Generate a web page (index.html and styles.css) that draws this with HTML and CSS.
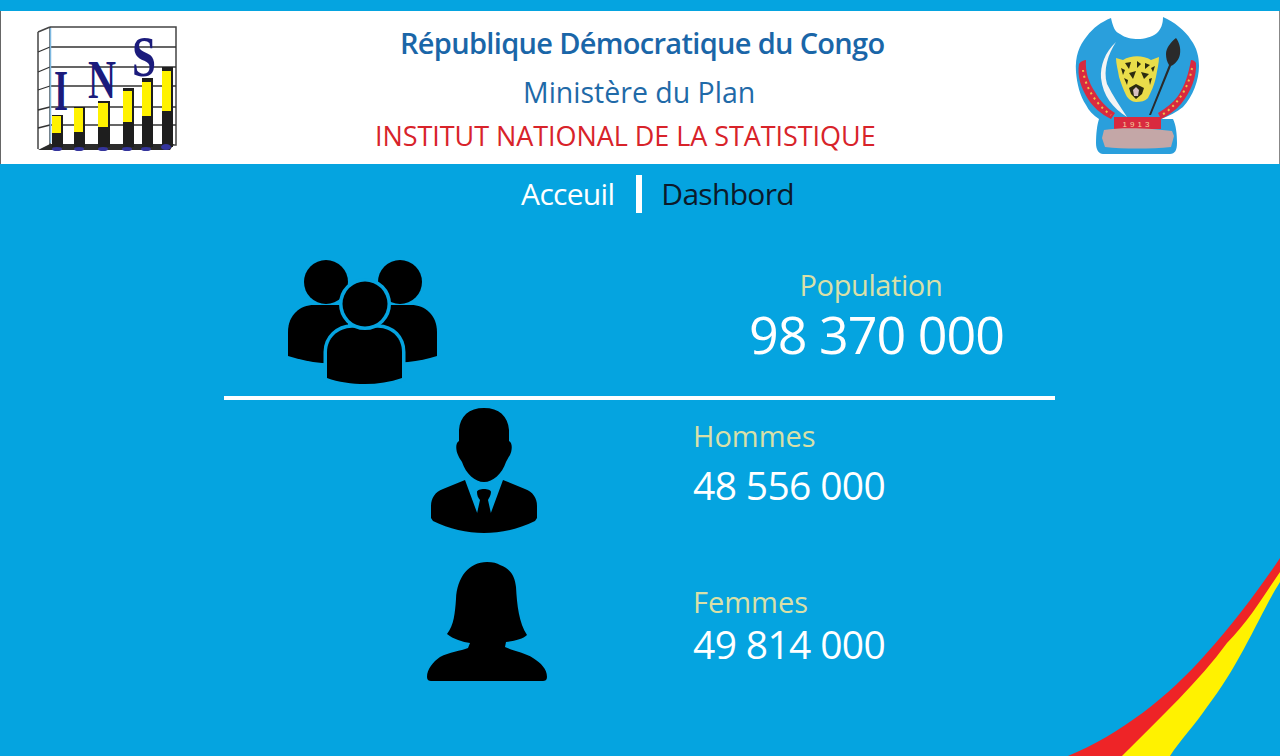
FILE: index.html
```html
<!DOCTYPE html>
<html lang="fr">
<head>
<meta charset="utf-8">
<title>INS</title>
<link rel="stylesheet" href="styles.css">
</head>
<body>
<header class="banner">
  <svg class="logo" viewBox="36 24 144 128" width="144" height="128">
    <path class="wall" d="M50 27H176V145H50V27M38 32L50 27M38 32V149"/>
    <path class="grid" d="M50 47H176M50 67H176M50 86H176M50 107H176M50 125H176M38 52L50 47M38 72L50 67M38 90L50 86M38 110L50 107M38 128L50 125"/>
    <path class="edge" d="M50.500 28V143"/>
    <path class="floor" d="M38 150L50 144H174L170 150Z"/>
    <g class="dark">
      <rect x="52" y="115" width="11" height="32"/><rect x="74" y="107" width="11" height="40"/><rect x="98" y="101" width="12" height="46"/>
      <rect x="123" y="88" width="11" height="59"/><rect x="142" y="78" width="11" height="69"/><rect x="162" y="67" width="11" height="80"/>
    </g>
    <g class="yellow">
      <rect x="52" y="116" width="9" height="17"/><rect x="74" y="108" width="9" height="24"/><rect x="98" y="103" width="10" height="24"/>
      <rect x="123" y="91" width="9" height="31"/><rect x="142" y="82" width="9" height="34"/><rect x="162" y="71" width="9" height="40"/>
    </g>
    <g class="feet">
      <ellipse cx="57" cy="149" rx="5" ry="2"/><ellipse cx="79" cy="149" rx="5" ry="2"/><ellipse cx="103" cy="149" rx="5" ry="2"/>
      <ellipse cx="127" cy="149" rx="5" ry="2"/><ellipse cx="146" cy="149" rx="5" ry="2"/><ellipse cx="166" cy="147" rx="5" ry="3"/>
    </g>
    <text class="ins" x="54" y="110" font-size="56" textLength="14" lengthAdjust="spacingAndGlyphs">I</text>
    <text class="ins" x="88" y="98" font-size="54" textLength="28" lengthAdjust="spacingAndGlyphs">N</text>
    <text class="ins" x="132" y="76" font-size="58" textLength="24" lengthAdjust="spacingAndGlyphs">S</text>
  </svg>
  <div class="titles">
    <h1 class="republic">République Démocratique du Congo</h1>
    <p class="ministry">Ministère du Plan</p>
    <p class="institute">INSTITUT NATIONAL DE LA STATISTIQUE</p>
  </div>
  <svg class="arms" viewBox="1070 14 132 142" width="132" height="142">
    <path class="shield" d="M1110 18C1112 27 1114 32 1119 34C1124 38 1131 39 1137 39C1143 39 1151 37 1156 33C1160 29 1162 24 1162 17C1173 22 1184 30 1190 40C1196 48 1198 57 1198 66C1198 80 1192 96 1182 107C1176 112 1168 116 1160 119H1172C1175 125 1176 134 1176 143C1176 150 1174 154 1169 154H1102C1098 154 1095 150 1095 143C1095 134 1096 125 1098 119C1092 115 1088 111 1085 105C1079 96 1076 84 1075 72C1074 56 1078 46 1086 36C1092 28 1100 22 1110 18Z"/>
    <path class="band" d="M1078 64C1080 61 1083 60 1085 60C1084 72 1088 83 1094 92C1099 101 1106 108 1114 113L1110 119C1100 114 1092 107 1087 99C1080 88 1076 76 1078 64Z"/>
    <path class="band" d="M1190 60C1192 60 1194 61 1195 63C1196 76 1190 92 1180 104C1174 111 1166 116 1160 119L1157 113C1165 108 1172 103 1177 96C1184 86 1188 72 1190 60Z"/>
    <path class="motto" d="M1082 70C1084 86 1094 104 1110 115"/>
    <path class="motto" d="M1191 68C1188 86 1178 104 1161 115"/>
    <path class="sword" d="M1115 42C1104 52 1099 66 1100 78C1102 96 1112 108 1126 117C1119 106 1112 96 1106 84C1102 70 1107 54 1115 42Z"/>
    <path class="spear" d="M1175 38C1170 42 1165 48 1165 54C1165 58 1166 62 1168 65L1148 115H1150L1170 66C1174 64 1178 60 1179 54C1180 48 1178 42 1175 38Z"/>
    <path class="leopard" d="M1115 58L1122 60C1130 55 1142 55 1150 60L1158 57C1158 64 1156 70 1155 77C1153 86 1150 92 1147 98C1144 101 1140 102 1135 102C1131 102 1127 99 1125 95C1122 89 1120 83 1118 77C1117 70 1115 64 1115 58Z"/>
    <path class="spots" d="M1124 63L1130 62L1128 69ZM1136 61L1140 64L1136 68ZM1144 63L1149 65L1144 69ZM1120 68L1124 70L1122 75ZM1150 68L1154 66L1152 72ZM1128 73L1135 71L1132 79ZM1140 72L1148 74L1143 79ZM1123 78L1127 80L1126 85ZM1148 79L1151 78L1149 85ZM1128 88L1135 84L1143 88L1141 94L1135 99L1130 94Z"/>
    <path class="fang" d="M1132 90L1135 87L1138 90L1137 96H1133Z"/>
    <rect class="date-bar" x="1113" y="117" width="47" height="12"/>
    <text class="date" x="1136.500" y="127" text-anchor="middle">1913</text>
    <path class="cloth" d="M1103 130C1120 127 1150 128 1171 131L1173 136L1170 147C1150 149 1122 149 1104 147L1101 138Z"/>
  </svg>
</header>

<nav class="menu">
  <a class="menu-link current">Acceuil</a>
  <span class="menu-sep"></span>
  <a class="menu-link">Dashbord</a>
</nav>

<main class="stats">
  <section class="total">
    <svg class="icon-people" viewBox="0 0 150 126" width="150" height="126">
      <circle cx="38" cy="22" r="22"/>
      <circle cx="112" cy="22" r="22"/>
      <path d="M0 96V72C0 55 12 45 26 45H60V104L34 103C22 102 10 99 0 96Z"/>
      <path d="M149 96V72C149 55 137 45 123 45H90V104L120 102C130 101 140 99 149 96Z"/>
      <path class="ringed" d="M39 118V92C39 78 50 68 64 67.700H90C104 68 114 78 114 92V118C102 122 90 124 77 124C64 124 50 122 39 118Z"/>
      <circle class="ringed" cx="77" cy="44" r="22.500"/>
    </svg>
    <div class="total-text">
      <div class="label label-total">Population</div>
      <div class="value-large">98 370 000</div>
    </div>
  </section>
  <hr class="rule">
  <section class="row row-men">
    <svg class="icon-man" viewBox="0 0 106 126" width="106" height="126">
      <path d="M53 0C68 0 77 8 78 22C78 26 78 30 78 33C82 35 81 43 79 47C77 50 76 52 75 54C71 66 62 74 53 74C44 74 35 66 31 54C30 52 28 50 27 47C25 43 24 35 28 33C28 30 28 26 28 22C29 8 38 0 53 0Z"/>
      <path d="M34 72L12 81C4 84 0 90 0 98V110L2 113C18 121 36 125 53 125C70 125 88 121 104 113L106 110V98C106 90 102 84 94 81L72 72L58 110H48Z"/>
      <path d="M46 84C46 80 60 80 60 84C60 87 58 90 57 92L61 110L53 118L45 110L49 92C47 90 46 87 46 84Z"/>
    </svg>
    <div class="row-text row-text-men">
      <div class="label">Hommes</div>
      <div class="value value-men">48 556 000</div>
    </div>
  </section>
  <section class="row row-women">
    <svg class="icon-woman" viewBox="0 0 120 120" width="120" height="120">
      <path d="M60 1C66 1 70 2 73 4C84 8 88 16 89 26C90 44 92 62 100 74C96 78 88 80 79 81L78 86C86 90 98 92 106 97C114 102 120 108 120 116C120 119 118 120 116 120H4C2 120 0 119 0 116C0 108 6 101 13 96C22 91 34 90 41 87L43 82C36 81 26 78 20 73C27 64 28 52 29 38C30 16 42 1 60 1Z"/>
    </svg>
    <div class="row-text row-text-women">
      <div class="label label-women">Femmes</div>
      <div class="value">49 814 000</div>
    </div>
  </section>
</main>

<svg class="ribbon" viewBox="1060 550 220 206" width="220" height="206">
  <path class="ribbon-red" d="M1068 756C1120 735 1170 695 1205 655C1235 622 1262 585 1280 558V574L1170 756Z"/>
  <path class="ribbon-yellow" d="M1122 756C1160 718 1200 680 1227 643C1250 620 1266 592 1280 572V582C1262 610 1240 665 1207 707C1195 725 1180 740 1170 756Z"/>
</svg>
</body>
</html>
```

FILE: styles.css
```css
* { box-sizing: border-box; }
html, body { margin: 0; height: 100%; }
body {
  position: relative;
  width: 1280px;
  height: 756px;
  overflow: hidden;
  padding-top: 11px;
  background: #05a4e0;
  font-family: "Open Sans", "Noto Sans", sans-serif;
  color: #fff;
}
.banner {
  height: 153px;
  background: #fff;
  border-left: 1px solid #666;
  border-right: 1px solid #888;
  display: grid;
  grid-template-columns: 35px 144px 1fr 132px 76px;
  align-items: start;
}
.logo { grid-column: 2; margin-top: 13px; display: block; }
.titles { grid-column: 3; display: flex; flex-direction: column; align-items: flex-start; }
.arms { grid-column: 4; margin-top: 3px; display: block; }
.republic, .ministry, .institute { margin: 0; white-space: nowrap; }
.republic { margin: 11px 0 0 220px; font-size: 29px; line-height: 42px; font-weight: 600; color: #1a66a8; letter-spacing: -.68px; }
.ministry { margin: 8px 0 0 343px; font-size: 28.500px; line-height: 40px; color: #1f6aa8; }
.institute { margin: 4px 0 0 195px; font-size: 27px; line-height: 40px; color: #d8232a; letter-spacing: -.06px; }

.wall { fill: #fff; stroke: #444; stroke-width: 1.500; }
.grid { fill: none; stroke: #333; stroke-width: 1.300; }
.edge { fill: none; stroke: #7db8e0; stroke-width: 1.500; }
.floor { fill: #2b2b2b; }
.dark { fill: #1e1e1e; }
.yellow { fill: #fff200; }
.feet { fill: #34349c; }
.ins { font-family: "Liberation Serif", serif; font-weight: 700; fill: #1b1b7c; }

.shield { fill: #2a9fdc; }
.band { fill: #d92a3f; }
.motto { fill: none; stroke: #e9c34a; stroke-width: 2; stroke-dasharray: 2 4; }
.sword { fill: #f4f4f4; }
.spear { fill: #2a2a2a; }
.leopard { fill: #e9dd4a; }
.spots { fill: #2b2b10; }
.fang { fill: #d8c0c0; }
.date-bar { fill: #d92a3f; }
.date { font-family: "Liberation Sans", sans-serif; font-size: 8px; letter-spacing: 3px; fill: #f3d6a0; }
.cloth { fill: #c4a7a7; }

.menu { height: 60px; display: flex; align-items: center; justify-content: center; padding-left: 35px; font-size: 30px; letter-spacing: -.7px; }
.menu-link { color: #0c1a2a; margin-bottom: 2px; }
.menu-link.current { color: #fff; }
.menu-sep { width: 6px; height: 38px; margin: 0 19px 0 22px; background: #fff; }

.stats { display: flex; flex-direction: column; }
.total { display: flex; height: 172px; padding: 36px 0 0 288px; }
.icon-people { display: block; flex: none; }
.ringed { stroke: #05a4e0; stroke-width: 7; paint-order: stroke; }
.total-text { margin-left: 311px; margin-top: 6px; display: flex; flex-direction: column; align-items: center; }
.value-large { font-size: 52px; line-height: 60px; letter-spacing: -1px; white-space: nowrap; }
.label { font-size: 29px; line-height: 38px; color: #d9e0a8; }
.label-total { letter-spacing: -.4px; margin-right: 11px; }
.label-women { line-height: 34px; }
.value { font-size: 39px; line-height: 50px; letter-spacing: -.65px; white-space: nowrap; }
.value-men { margin-top: 5px; }
.rule { margin: 0 0 0 224px; width: 831px; height: 4px; border: 0; background: #fff; }
.row { display: flex; align-items: flex-start; }
.row-men { height: 156px; padding: 8px 0 0 431px; }
.row-women { padding: 5px 0 0 427px; }
.icon-man, .icon-woman { display: block; flex: none; }
.row-text-men { margin-left: 156px; margin-top: 9px; }
.row-text-women { margin-left: 146px; margin-top: 24px; }
.ribbon { position: absolute; right: 0; bottom: 0; display: block; }
.ribbon-red { fill: #ee2427; }
.ribbon-yellow { fill: #fff200; }
```
